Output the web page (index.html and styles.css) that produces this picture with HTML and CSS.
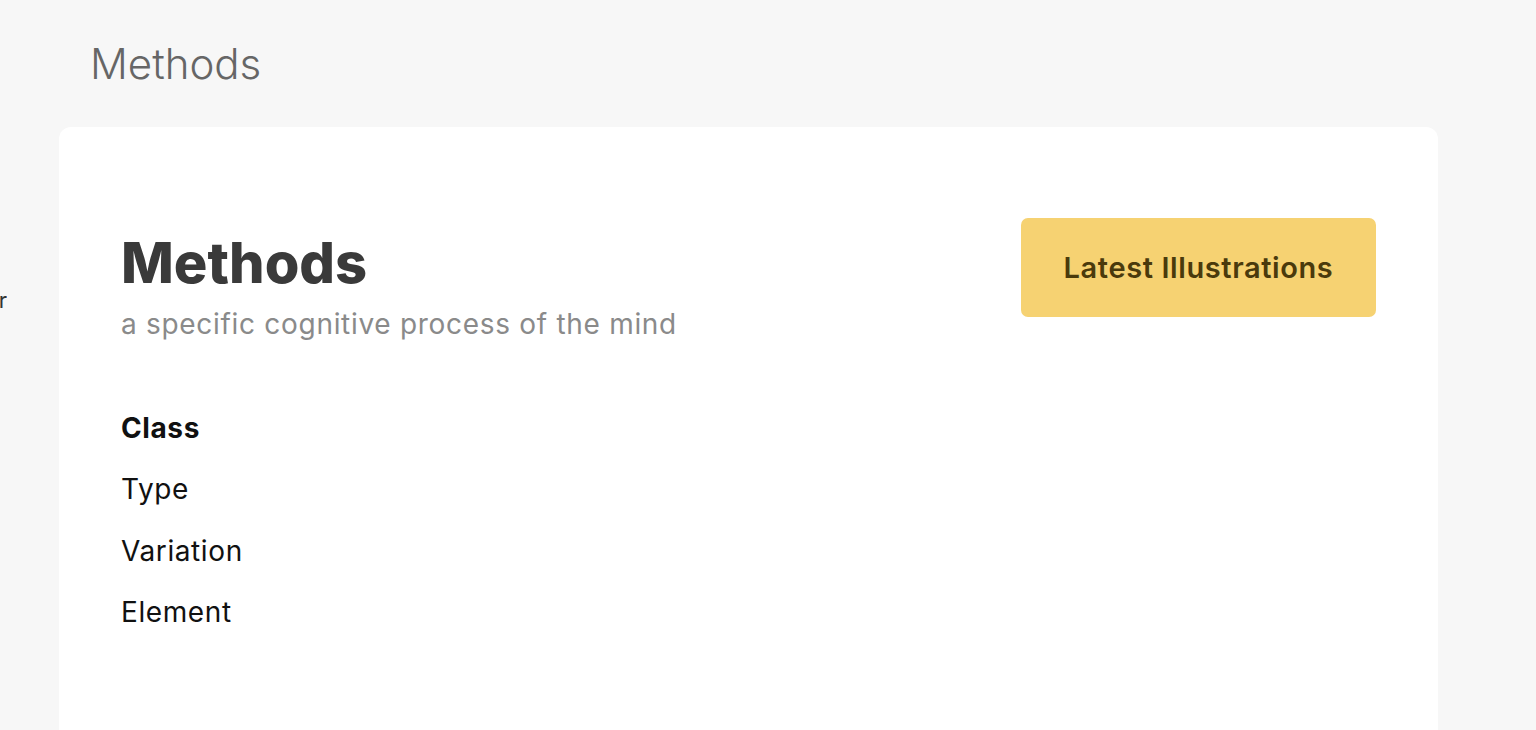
FILE: index.html
```html
<!DOCTYPE html>
<html lang="en">

<head>
    <meta charset="UTF-8">
    <meta name="viewport" content="width=device-width, initial-scale=1.0">
    <title>Methods</title>
    <link rel="stylesheet" href="styles.css">
</head>

<body>

    <div class="layout">
        <aside class="sidebar">
            <p class="sidebar-label">Filter</p>
        </aside>

        <main class="content">
            <h1 class="page-title">Methods</h1>

            <section class="card">
                <div class="card-head">
                    <div class="card-intro">
                        <h2>Methods</h2>
                        <p class="subtitle">a specific cognitive process of the mind</p>
                    </div>
                    <button class="latest-button">Latest Illustrations</button>
                </div>

                <ul class="levels">
                    <li class="active">Class</li>
                    <li>Type</li>
                    <li>Variation</li>
                    <li>Element</li>
                </ul>
            </section>
        </main>
    </div>

</body>

</html>
```

FILE: styles.css
```css
body {
    font-family: Inter, 'Noto Sans', sans-serif;
    margin: 0;
    padding: 0;
    background-color: #f7f7f7;
    color: #111;
    height: 730px;
    overflow: hidden;
}

.layout {
    display: flex;
}

.sidebar {
    width: 7px;
    overflow: hidden;
    flex-shrink: 0;
}

.sidebar-label {
    margin: 287px 0 0;
    font-size: 22px;
    color: #333;
    text-align: right;
    white-space: nowrap;
    direction: rtl;
}

.content {
    flex: 1;
    padding-left: 52px;
}

.page-title {
    margin: 37px 0 0 31px;
    font-size: 42px;
    font-weight: 300;
    line-height: 54px;
    color: #666;
}

.card {
    background-color: #fff;
    border-radius: 12px;
    width: 1379px;
    height: 640px;
    margin-top: 36px;
    box-sizing: border-box;
    padding: 91px 62px 0;
}

.card-head {
    display: flex;
    justify-content: space-between;
    align-items: flex-start;
}

.card-intro {
    padding-top: 12px;
}

.card-intro h2 {
    margin: 0;
    font-size: 56px;
    font-weight: 800;
    line-height: 66px;
    color: #3a3a3a;
}

.subtitle {
    margin: 11px 0 0;
    font-size: 28px;
    line-height: 34px;
    letter-spacing: 0.7px;
    color: #8a8a8a;
}

.latest-button {
    width: 355px;
    height: 99px;
    background-color: #f6d272;
    color: #4a3a0c;
    border: none;
    border-radius: 7px;
    font-family: inherit;
    font-size: 29px;
    font-weight: 600;
    letter-spacing: 0.6px;
    cursor: pointer;
}

.levels {
    list-style: none;
    margin: 57px 0 0;
    padding: 0;
}

.levels li {
    font-size: 28px;
    line-height: 61.3px;
    letter-spacing: 0.6px;
    color: #111;
}

.levels li.active {
    font-weight: 700;
}
```
